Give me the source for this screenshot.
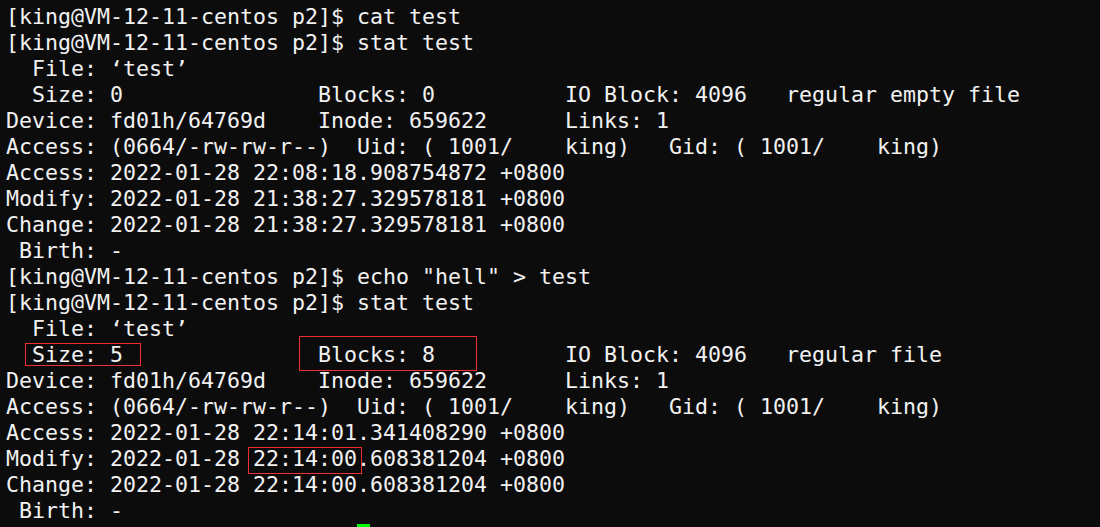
import React from "react";

const lines = [
  "[king@VM-12-11-centos p2]$ cat test",
  "[king@VM-12-11-centos p2]$ stat test",
  "  File: ‘test’",
  "  Size: 0               Blocks: 0          IO Block: 4096   regular empty file",
  "Device: fd01h/64769d    Inode: 659622      Links: 1",
  "Access: (0664/-rw-rw-r--)  Uid: ( 1001/    king)   Gid: ( 1001/    king)",
  "Access: 2022-01-28 22:08:18.908754872 +0800",
  "Modify: 2022-01-28 21:38:27.329578181 +0800",
  "Change: 2022-01-28 21:38:27.329578181 +0800",
  " Birth: -",
  "[king@VM-12-11-centos p2]$ echo \"hell\" > test",
  "[king@VM-12-11-centos p2]$ stat test",
  "  File: ‘test’",
  "  Size: 5               Blocks: 8          IO Block: 4096   regular file",
  "Device: fd01h/64769d    Inode: 659622      Links: 1",
  "Access: (0664/-rw-rw-r--)  Uid: ( 1001/    king)   Gid: ( 1001/    king)",
  "Access: 2022-01-28 22:14:01.341408290 +0800",
  "Modify: 2022-01-28 22:14:00.608381204 +0800",
  "Change: 2022-01-28 22:14:00.608381204 +0800",
  " Birth: -",
];

export default function App() {
  return (
    <div className="relative w-[1100px] h-[527px] overflow-hidden bg-[#0c0c0c] text-[#f2f2f2] pt-[4px] pl-[6px] font-['DejaVu_Sans_Mono',monospace] text-[21.6px] leading-[26px]">
      {lines.map((l, i) => (
        <div key={i} className="whitespace-pre h-[26px]">
          {l}
        </div>
      ))}
      <div className="absolute left-[357px] top-[524px] w-[13px] h-[6px] bg-[#00ff00]" />
      <div className="absolute left-[25px] top-[343px] w-[116px] h-[23px] border border-[#f03030]" />
      <div className="absolute left-[299px] top-[336px] w-[178px] h-[35px] border border-[#f03030]" />
      <div className="absolute left-[248px] top-[447px] w-[114px] h-[27px] border border-[#f03030]" />
    </div>
  );
}
